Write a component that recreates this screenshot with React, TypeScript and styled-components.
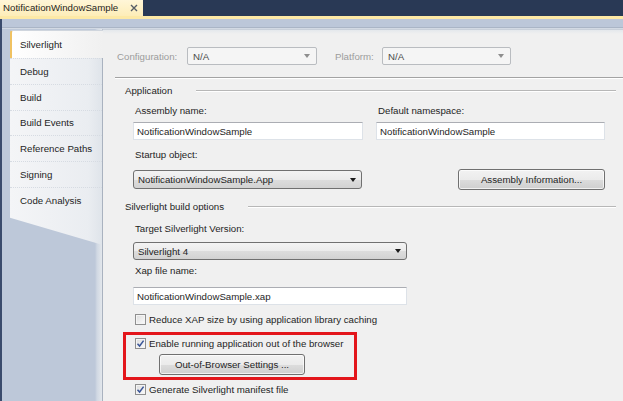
import React from 'react'
import styled, { createGlobalStyle } from 'styled-components'

const GlobalStyle = createGlobalStyle`
  html, body {
    margin: 0;
    padding: 0;
    background: #f0f0f0;
  }
  body {
    font-family: "Liberation Sans", Arial, sans-serif;
    font-size: 9.7px;
    color: #1e1e1e;
  }
`

const Window = styled.div`
  width: 623px;
  height: 401px;
  overflow: hidden;
  display: flex;
  flex-direction: column;
  background: #f0f0f0;
`

const DocTabBar = styled.div`
  height: 16px;
  flex: none;
  background: #293955;
  display: flex;
`

const DocTab = styled.div`
  width: 143px;
  box-sizing: border-box;
  padding: 0 5px 0 3px;
  display: flex;
  align-items: center;
  justify-content: space-between;
  background: linear-gradient(#fff6d8, #fdedb8);
  line-height: 16px;
`

const CloseGlyph = styled.svg`
  width: 8px;
  height: 8px;
  flex: none;
`

const YellowStrip = styled.div`
  height: 3px;
  flex: none;
  background: #fde9a6;
`

const Frame = styled.div`
  flex: 1;
  display: flex;
  flex-direction: column;
  border-left: 2px solid #3a4b6c;
  background: #bdc8d9;
`

const HeaderBand = styled.div`
  height: 10px;
  flex: none;
  background: linear-gradient(
    to bottom,
    #bcc7d9 0,
    #bcc7d9 8px,
    #aab5c6 8px,
    #aab5c6 9px,
    #d3dae4 9px
  );
`

const Body = styled.div`
  flex: 1;
  display: flex;
  min-height: 0;
`

const SideNav = styled.div`
  width: 100px;
  flex: none;
  padding: 1px 0 0 8px;
  box-sizing: border-box;
  background: linear-gradient(
    to right,
    #bdc8d9 0,
    #bdc8d9 93px,
    #d0d8e3 95px,
    #e3e7ec 100px
  );
`

const TabList = styled.div`
  width: 92px;
  display: flex;
  flex-direction: column;
`

const SelectedTab = styled.div`
  position: relative;
  z-index: 1;
  width: 93px;
  height: 28px;
  box-sizing: border-box;
  display: flex;
  align-items: center;
  padding-left: 8px;
  border-left: 2px solid #f0c262;
  border-top: 1px solid #cfd5dd;
  border-top-left-radius: 3px;
  background: linear-gradient(to right, #ffffff, #f6f6f6 60%, #f0f0f0);
`

const NavTab = styled.div`
  height: 25.8px;
  box-sizing: border-box;
  display: flex;
  align-items: center;
  padding-left: 10px;
  border-top: 1px dotted #d6dbe2;
  background: linear-gradient(to right, #f4f5f7, #eaedf1 85%, #dfe4ea);
`

const TabFoot = styled.div`
  height: 32px;
  background: linear-gradient(to right, #f4f5f7, #eaedf1 85%, #dfe4ea);
  clip-path: polygon(0 0, 100% 0, 100% 100%, 0 5px);
`

const ContentPane = styled.div`
  flex: 1;
  border-left: 1px solid #a9b2bf;
  border-top: 1px solid #c9d0da;
  background: linear-gradient(#e4e8ec, #f0f0f0 4px);
  padding-left: 12px;
  display: flex;
  flex-direction: column;
`

const ConfigRow = styled.div`
  margin-top: 17px;
  padding-left: 2px;
  display: flex;
  align-items: center;
  height: 18px;
`

const MutedLabel = styled.span<{ $width: number; $gap?: number }>`
  width: ${({ $width }) => $width}px;
  margin-left: ${({ $gap }) => $gap || 0}px;
  color: #9c9c9c;
  flex: none;
`

const DisabledCombo = styled.div<{ $width: number }>`
  width: ${({ $width }) => $width}px;
  height: 18px;
  box-sizing: border-box;
  border: 1px solid #b9bcc0;
  border-radius: 2px;
  background: #f5f5f5;
  color: #4a4a4a;
  display: flex;
  align-items: center;
  justify-content: space-between;
  padding: 0 6px 0 5px;
`

const Arrow = styled.span<{ $muted?: boolean }>`
  width: 0;
  height: 0;
  border-left: 3.5px solid transparent;
  border-right: 3.5px solid transparent;
  border-top: 4px solid ${({ $muted }) => ($muted ? '#8e8e8e' : '#1a1a1a')};
`

const Divider = styled.div`
  margin-top: 12px;
  border-top: 1px solid #a3a3a3;
  border-bottom: 1px solid #ffffff;
`

const GroupHeader = styled.div<{ $top: number }>`
  margin-top: ${({ $top }) => $top}px;
  height: 13px;
  display: flex;
  align-items: center;
  padding-left: 10px;
  margin-right: 7px;
`

const GroupRule = styled.div`
  flex: 1;
  margin-left: 24px;
  border-top: 1px solid #b7b7b7;
  border-bottom: 1px solid #ffffff;
`

const Indented = styled.div`
  padding-left: 18px;
  display: flex;
  flex-direction: column;
`

const Row = styled.div<{ $top: number }>`
  margin-top: ${({ $top }) => $top}px;
  display: flex;
  align-items: center;
`

const FieldLabel = styled.div<{ $top?: number; $width?: number }>`
  margin-top: ${({ $top }) => $top || 0}px;
  width: ${({ $width }) => ($width ? `${$width}px` : 'auto')};
  flex: none;
  height: 14px;
  line-height: 14px;
  padding-left: 2px;
  box-sizing: border-box;
`

const TextBox = styled.div<{ $width: number; $top?: number; $gap?: number }>`
  width: ${({ $width }) => $width}px;
  margin-top: ${({ $top }) => $top || 0}px;
  margin-left: ${({ $gap }) => $gap || 0}px;
  height: 18px;
  box-sizing: border-box;
  border: 1px solid #dde2e8;
  border-top-color: #abadb3;
  background: #ffffff;
  display: flex;
  align-items: center;
  padding-left: 3px;
  flex: none;
`

const Combo = styled.div<{ $width: number; $top?: number; $height?: number }>`
  width: ${({ $width }) => $width}px;
  height: ${({ $height }) => $height || 19}px;
  margin-top: ${({ $top }) => $top || 0}px;
  box-sizing: border-box;
  border: 1px solid #707070;
  border-radius: 3px;
  background: linear-gradient(#f3f3f3 0%, #ebebeb 50%, #dddddd 50%, #d2d2d2 100%);
  display: flex;
  align-items: center;
  justify-content: space-between;
  padding: 0 5px 0 4px;
  flex: none;
`

const Button = styled.div<{ $width: number; $height?: number; $gap?: number; $top?: number }>`
  width: ${({ $width }) => $width}px;
  height: ${({ $height }) => $height || 21}px;
  margin-left: ${({ $gap }) => $gap || 0}px;
  margin-top: ${({ $top }) => $top || 0}px;
  box-sizing: border-box;
  border: 1px solid #707070;
  border-radius: 3px;
  background: linear-gradient(#f2f2f2 0%, #ebebeb 50%, #dddddd 50%, #cfcfcf 100%);
  box-shadow: inset 0 0 0 1px rgba(255, 255, 255, 0.7);
  display: flex;
  align-items: center;
  justify-content: center;
  flex: none;
`

const CheckRow = styled.div<{ $top: number; $indent: number }>`
  margin-top: ${({ $top }) => $top}px;
  margin-left: ${({ $indent }) => $indent}px;
  height: 14px;
  display: flex;
  align-items: center;
  gap: 3px;
`

const Box = styled.div`
  width: 11px;
  height: 11px;
  box-sizing: border-box;
  border: 1px solid #8f8f8f;
  background: linear-gradient(135deg, #dcdcdc, #fbfbfb);
  box-shadow: inset 0 0 0 1px #f4f4f4;
  display: flex;
  align-items: center;
  justify-content: center;
  flex: none;
`

const Highlight = styled.div`
  margin-top: 6px;
  margin-left: 8px;
  width: 234px;
  height: 48px;
  box-sizing: border-box;
  border: 3px solid #e3161b;
  padding: 1px 0 0 9px;
  display: flex;
  flex-direction: column;
`

const CheckBox = ({ checked }: { checked?: boolean }) => (
  <Box>
    {checked && (
      <svg width="9" height="9" viewBox="0 0 9 9">
        <path d="M1.5 4.8 L3.6 7 L7.6 1.6" fill="none" stroke="#3a5597" strokeWidth="1.5" />
      </svg>
    )}
  </Box>
)

const navItems = ['Debug', 'Build', 'Build Events', 'Reference Paths', 'Signing', 'Code Analysis']

export default function App() {
  return (
    <Window>
      <GlobalStyle />
      <DocTabBar>
        <DocTab>
          <span>NotificationWindowSample</span>
          <CloseGlyph viewBox="0 0 8 8">
            <path d="M1 1 L7 7 M7 1 L1 7" stroke="#555c66" strokeWidth="1.4" />
          </CloseGlyph>
        </DocTab>
      </DocTabBar>
      <YellowStrip />
      <Frame>
        <HeaderBand />
        <Body>
          <SideNav>
            <TabList>
              <SelectedTab>Silverlight</SelectedTab>
              {navItems.map((item) => (
                <NavTab key={item}>{item}</NavTab>
              ))}
              <TabFoot />
            </TabList>
          </SideNav>
          <ContentPane>
            <ConfigRow>
              <MutedLabel $width={70}>Configuration:</MutedLabel>
              <DisabledCombo $width={130}>
                N/A
                <Arrow $muted />
              </DisabledCombo>
              <MutedLabel $width={47} $gap={18}>Platform:</MutedLabel>
              <DisabledCombo $width={129}>
                N/A
                <Arrow $muted />
              </DisabledCombo>
            </ConfigRow>
            <Divider />

            <GroupHeader $top={5}>
              Application
              <GroupRule />
            </GroupHeader>
            <Indented>
              <Row $top={7}>
                <FieldLabel $width={243}>Assembly name:</FieldLabel>
                <FieldLabel>Default namespace:</FieldLabel>
              </Row>
              <Row $top={4}>
                <TextBox $width={230}>NotificationWindowSample</TextBox>
                <TextBox $width={229} $gap={13}>NotificationWindowSample</TextBox>
              </Row>
              <FieldLabel $top={8}>Startup object:</FieldLabel>
              <Row $top={7}>
                <Combo $width={229}>
                  NotificationWindowSample.App
                  <Arrow />
                </Combo>
                <Button $width={147} $gap={96}>Assembly Information...</Button>
              </Row>
            </Indented>

            <GroupHeader $top={10}>
              Silverlight build options
              <GroupRule />
            </GroupHeader>
            <Indented>
              <FieldLabel $top={9}>Target Silverlight Version:</FieldLabel>
              <Combo $width={274} $height={18} $top={6}>
                Silverlight 4
                <Arrow />
              </Combo>
              <FieldLabel $top={4}>Xap file name:</FieldLabel>
              <TextBox $width={274} $top={9}>NotificationWindowSample.xap</TextBox>
            </Indented>

            <CheckRow $top={7} $indent={20}>
              <CheckBox />
              Reduce XAP size by using application library caching
            </CheckRow>
            <Highlight>
              <CheckRow $top={0} $indent={0}>
                <CheckBox checked />
                Enable running application out of the browser
              </CheckRow>
              <Button $width={146} $gap={24} $top={4}>Out-of-Browser Settings ...</Button>
            </Highlight>
            <CheckRow $top={2} $indent={20}>
              <CheckBox checked />
              Generate Silverlight manifest file
            </CheckRow>
          </ContentPane>
        </Body>
      </Frame>
    </Window>
  )
}
